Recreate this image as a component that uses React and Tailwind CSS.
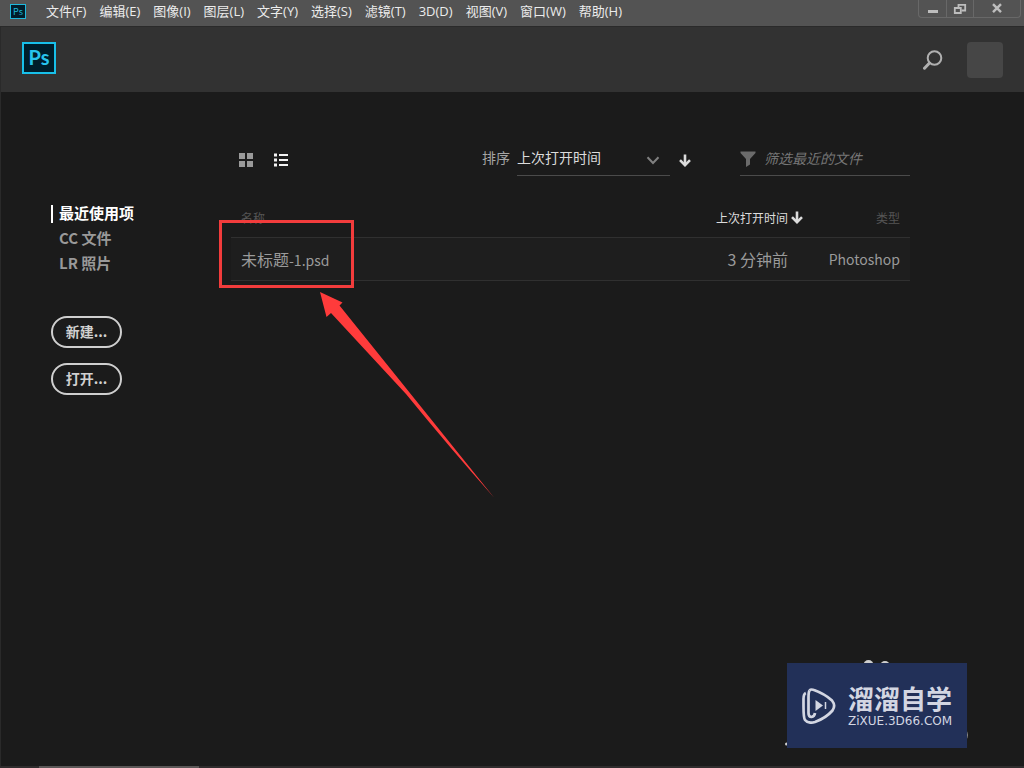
import React, { useState } from 'react';
import clsx from 'clsx';

const MENUS = ['文件(F)', '编辑(E)', '图像(I)', '图层(L)', '文字(Y)', '选择(S)', '滤镜(T)', '3D(D)', '视图(V)', '窗口(W)', '帮助(H)'];

const SOURCES = ['最近使用项', 'CC 文件', 'LR 照片'];

const FILES = [{ name: '未标题', suffix: '-1.psd', opened: '3 分钟前', type: 'Photoshop' }];

const ArrowDown = ({ className }) => (
  <svg viewBox="0 0 12 13" className={clsx('w-3 h-[13px]', className)} fill="none" stroke="currentColor" strokeWidth="2.6" aria-hidden="true">
    <path d="M6 0.5V11" />
    <path d="M1 6.2L6 11.2L11 6.2" />
  </svg>
);

const MenuBar = () => (
  <header className="flex h-[27px] items-start justify-between bg-[#535353] border-b border-[#2a2a2a] pl-[10px] pr-[3px]">
    <div className="flex items-center h-[23px]">
      <span className="flex items-center justify-center w-4 h-[15px] mr-5 border border-[#1fb8dc] bg-[#001d2b] text-[#1fb8dc] text-[9px] leading-none">
        Ps
      </span>
      <nav className="flex gap-[13px] pb-0.5 font-['Open_Sans','Noto_Sans_CJK_SC',sans-serif] text-[13px] text-[#ececec]">
        {MENUS.map((menu) => (
          <button key={menu} type="button" className="whitespace-nowrap leading-5">
            {menu}
          </button>
        ))}
      </nav>
    </div>
    <div className="flex h-[18px] border border-t-0 border-[#686868] rounded-b-sm text-[#bdbdbd]">
      <button type="button" aria-label="最小化" className="w-7 flex justify-center border-r border-[#686868]">
        <svg viewBox="0 0 12 18" className="w-3 h-[18px]" fill="currentColor">
          <path d="M1 10h10v3H1z" />
        </svg>
      </button>
      <button type="button" aria-label="还原" className="w-[27px] flex justify-center border-r border-[#686868]">
        <svg viewBox="0 0 14 18" className="w-[14px] h-[18px]" fill="none" stroke="currentColor" strokeWidth="1.8">
          <path d="M5.5 7.5V4.8H12.2V10.5H8.5" />
          <path d="M1.8 8H7.8V13H1.8Z" />
        </svg>
      </button>
      <button type="button" aria-label="关闭" className="w-[46px] flex justify-center">
        <svg viewBox="0 0 12 18" className="w-3 h-[18px]" fill="none" stroke="currentColor" strokeWidth="2.4">
          <path d="M2 4.2L10 12.2M10 4.2L2 12.2" />
        </svg>
      </button>
    </div>
  </header>
);

const AppBar = () => (
  <div className="flex h-[65px] items-start justify-between bg-[#323232] pl-[21px] pr-[21px] pt-[15px]">
    <span className="flex items-center justify-center w-[34px] h-8 pb-0.5 border-2 border-[#18c0ea] bg-[#001e2b] text-[#27c4ee] font-['Lato',sans-serif] text-xl font-bold leading-none">
      Ps
    </span>
    <div className="flex items-center gap-6">
      <button type="button" aria-label="搜索" className="text-[#b0b0b0]">
        <svg viewBox="0 0 20 20" className="w-5 h-5" fill="none" stroke="currentColor">
          <circle cx="11.5" cy="8" r="6.8" strokeWidth="2" />
          <path d="M6.5 13L1.5 18.2" strokeWidth="3" strokeLinecap="round" />
        </svg>
      </button>
      <button type="button" aria-label="帐户" className="w-9 h-9 rounded-sm bg-[#464646]" />
    </div>
  </div>
);

const Sidebar = ({ active, onSelect }) => (
  <aside className="w-[230px] shrink-0 pl-[50px] pt-[109px]">
    <nav className="flex flex-col items-start text-[15px] font-bold">
      {SOURCES.map((source) => (
        <button
          key={source}
          type="button"
          onClick={() => onSelect(source)}
          className={clsx('flex items-center h-[25px] whitespace-nowrap', active === source ? 'text-white' : 'text-[#999]')}
        >
          <span className={clsx('w-0.5 h-[18px] mr-[6px]', active === source && 'bg-white')} />
          {source}
        </button>
      ))}
    </nav>
    <div className="flex flex-col items-start gap-[15px] mt-10 text-sm font-bold text-[#d0d0d0]">
      <button type="button" className="w-[71px] h-8 pb-0.5 rounded-full border-2 border-[#cfcfcf] leading-none">新建...</button>
      <button type="button" className="w-[71px] h-8 pb-0.5 rounded-full border-2 border-[#cfcfcf] leading-none">打开...</button>
    </div>
  </aside>
);

const Toolbar = () => (
  <div className="flex h-[34px] items-stretch justify-between pl-2">
    <div className="flex items-center gap-5 pt-0.5">
      <button type="button" aria-label="网格视图" className="text-[#9a9a9a]">
        <svg viewBox="0 0 14 14" className="w-[14px] h-[14px]" fill="currentColor">
          <path d="M0 0h6v6H0zM8 0h6v6H8zM0 8h6v6H0zM8 8h6v6H8z" />
        </svg>
      </button>
      <button type="button" aria-label="列表视图" className="text-[#f2f2f2]">
        <svg viewBox="0 0 16 14" className="w-4 h-[14px]" fill="currentColor">
          <path d="M1 0.5h3v3H1zM1 5.5h3v3H1zM1 10.5h3v3H1zM6 1h9v2H6zM6 6h9v2H6zM6 11h9v2H6z" />
        </svg>
      </button>
    </div>
    <div className="flex items-stretch text-sm">
      <label htmlFor="sort" className="pt-[5px] mr-[7px] text-[#a5a5a5]">排序</label>
      <div className="relative w-[153px] border-b border-[#4b4b4b]">
        <select id="sort" className="block w-full appearance-none bg-transparent pt-[5px] text-[#dcdcdc] outline-none">
          <option>上次打开时间</option>
        </select>
        <svg viewBox="0 0 14 9" className="absolute right-[10px] top-[14px] w-[14px] h-[9px] text-[#808080] pointer-events-none" fill="none" stroke="currentColor" strokeWidth="2">
          <path d="M1.5 1.2L7 7L12.5 1.2" />
        </svg>
      </div>
      <button type="button" aria-label="排序方向" className="flex items-center pt-0.5 ml-[9px] mr-[49px] text-[#dcdcdc]">
        <ArrowDown />
      </button>
      <label className="flex w-[170px] border-b border-[#4b4b4b]">
        <svg viewBox="0 0 16 16" className="w-4 h-4 mt-[9px] mr-2 shrink-0" fill="#6b6b6b" aria-hidden="true">
          <path d="M0.5 0.5H15.5V2L10 8V13.5L6 16V8L0.5 2Z" />
        </svg>
        <input
          type="text"
          aria-label="筛选最近的文件"
          placeholder="筛选最近的文件"
          className="w-full min-w-0 bg-transparent pb-px italic placeholder:text-[#777] outline-none"
        />
      </label>
    </div>
  </div>
);

const FileTable = () => (
  <table className="w-full mt-[23px] border-collapse text-base text-[#9a9a9a]">
    <thead>
      <tr className="h-[38px] text-xs text-[#555] border-b border-[#303030]">
        <th className="pl-[10px] text-left font-normal">名称</th>
        <th className="font-normal text-[#dcdcdc]">
          <button type="button" className="flex items-center gap-[3px] ml-auto">
            上次打开时间
            <ArrowDown />
          </button>
        </th>
        <th className="w-[107px] pr-[10px] text-right font-normal">类型</th>
      </tr>
    </thead>
    <tbody>
      {FILES.map((file) => (
        <tr key={file.name} className="h-[43px] border-b border-[#303030] bg-[#1e1e1e]">
          <td className="pl-[10px]">
            {file.name}
            <span className="text-sm">{file.suffix}</span>
          </td>
          <td className="pr-[15px] text-right">{file.opened}</td>
          <td className="pr-[10px] text-right text-sm">{file.type}</td>
        </tr>
      ))}
    </tbody>
  </table>
);

// red frame around the file row, with the pointer below it
const Callout = () => (
  <div className="absolute left-[218px] top-[128px] pointer-events-none">
    <div className="w-[135px] h-[68px] border-3 border-[#f23c3c]" />
    <svg viewBox="0 0 174 206" className="ml-[101px] mt-1 w-[174px] h-[206px]" fill="#ff3b3b" aria-hidden="true">
      <path d="M0 0L22.5 10.5L19.5 13.5L174 205.5Q130 156 86 102L11 21L6.5 25Z" />
    </svg>
  </div>
);

const Watermark = () => (
  <div className="absolute right-[57px] bottom-[18px]">
    <svg viewBox="0 0 184 92" className="absolute -left-[2px] -top-[5px] w-[184px] h-[92px]" fill="#cfcfcf" aria-hidden="true">
      <circle cx="83.5" cy="7" r="5" />
      <circle cx="100" cy="8" r="5" />
      <circle cx="1.5" cy="86" r="1.5" />
      <circle cx="176" cy="77" r="7" fill="#8a8a8a" />
    </svg>
    <div className="relative flex items-center w-[180px] h-[85px] pl-[15px] bg-[#223058] text-[#d3d6e2]">
      <svg viewBox="0 0 34 36" className="w-[34px] h-9 shrink-0" fill="none" stroke="currentColor" strokeWidth="2.7" aria-hidden="true">
        <path d="M7.5 2.5Q9 0.8 12 2Q23 6 30 12.5Q34 17.5 30.5 22.5Q24 30 13 34Q6 36 3 32Q1.5 30 1.5 18V11Q1.5 6 3.8 5" />
        <path d="M7.5 2.5Q6.5 4 6.5 10V25Q6.5 29 9.5 29Q12.5 28.5 13 25" />
        <path d="M13.5 12L21 17.5L13.5 23Z" fill="currentColor" stroke="none" />
        <path d="M23.5 14V21" strokeWidth="1.5" />
      </svg>
      <div className="ml-3">
        <p className="font-['Liberation_Sans','Noto_Sans_CJK_SC',sans-serif] text-[26px] leading-[30px] font-bold whitespace-nowrap">溜溜自学</p>
        <p className="font-['DejaVu_Sans',sans-serif] text-xs leading-3 whitespace-nowrap">ZiXUE.3D66.COM</p>
      </div>
    </div>
  </div>
);

export default function App() {
  const [source, setSource] = useState(SOURCES[0]);

  return (
    <div className="flex flex-col min-h-screen bg-[#1b1b1b] font-['Noto_Sans_CJK_SC',sans-serif]">
      <MenuBar />
      <div className="relative flex flex-col flex-1 border-l border-[#2a2a2a]">
        <AppBar />
        <main className="relative flex flex-1">
          <Sidebar active={source} onSelect={setSource} />
          <section className="flex-1 pt-[50px] pr-[114px]">
            <Toolbar />
            <FileTable />
          </section>
          <Callout />
        </main>
        <Watermark />
      </div>
      <footer className="h-0.5 bg-[#302d2e]">
        <div className="w-40 h-full ml-[39px] bg-[#5c5858]" />
      </footer>
    </div>
  );
}
